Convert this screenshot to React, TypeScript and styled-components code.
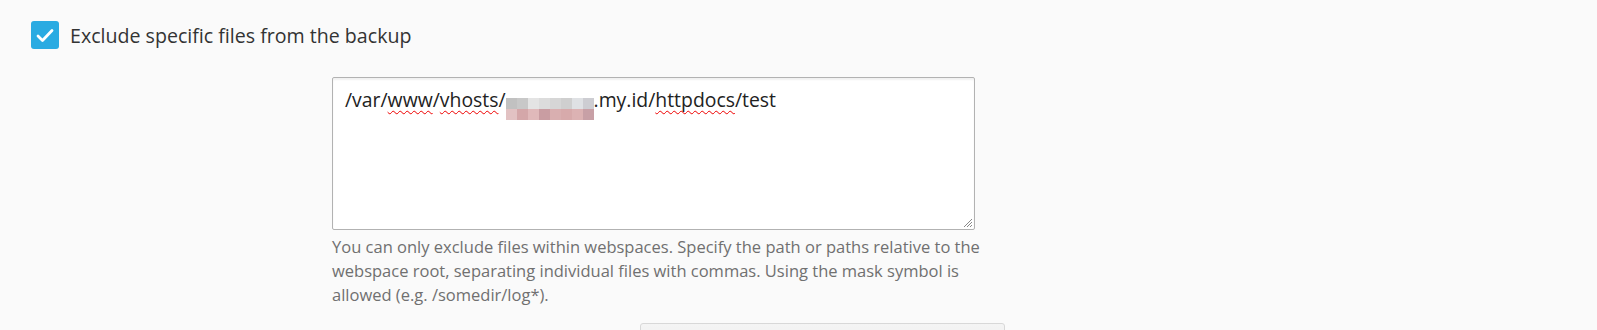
import styled, { createGlobalStyle } from 'styled-components';

const GlobalStyle = createGlobalStyle`
  html, body {
    margin: 0;
    padding: 0;
    background: #fafafa;
  }

  body {
    font-family: 'Open Sans', 'Noto Sans', 'Liberation Sans', sans-serif;
    color: #333;
  }
`;

const Page = styled.div`
  width: 1597px;
  height: 330px;
  overflow: hidden;
  background: #fafafa;
`;

const CheckRow = styled.label`
  display: flex;
  align-items: center;
  gap: 11px;
  padding: 21px 0 0 31px;
  font-size: 19.6px;
  color: #333;
  cursor: pointer;
`;

const CheckBox = styled.span`
  width: 28px;
  height: 28px;
  border-radius: 3px;
  background: #2aabe2;
  display: flex;
  align-items: center;
  justify-content: center;
`;

const Field = styled.div`
  display: flex;
  flex-direction: column;
  margin: 28px 0 0 332px;
  width: 680px;
`;

const TextBox = styled.div`
  position: relative;
  box-sizing: border-box;
  width: 643px;
  height: 153px;
  padding: 8px 12px;
  background: #fff;
  border: 1px solid #b2b2b2;
  border-radius: 2px;
  box-shadow: inset 0 2px 2px rgba(0, 0, 0, 0.06);
  font-size: 19.4px;
  color: #222;
  line-height: 28px;
`;

const Misspelled = styled.span`
  text-decoration: underline wavy #e00;
  text-decoration-thickness: 1px;
  text-underline-offset: 3px;
  text-decoration-skip-ink: none;
`;

const Mosaic = styled.span`
  display: inline-grid;
  grid-template-columns: repeat(8, 11px);
  grid-template-rows: 11px 11px;
  vertical-align: -2px;
`;

const Cell = styled.span<{ $c: string }>`
  background: ${(p) => p.$c};
`;

const Grip = styled.svg`
  position: absolute;
  right: 1px;
  bottom: 1px;
`;

const Hint = styled.p`
  margin: 5px 0 0;
  font-size: 16.5px;
  line-height: 24px;
  color: #707070;
`;

const Actions = styled.div`
  display: flex;
  margin: 16px 0 0 640px;
`;

const Button = styled.div`
  width: 363px;
  height: 36px;
  border: 1px solid #d8d8d8;
  border-radius: 3px;
  background: linear-gradient(#f4f4f4, #ececec);
`;

const TOP = ['#c1c1c1', '#c8c8c8', '#e4e4e4', '#dcdcdc', '#d6d6d6', '#cfcfcf', '#dfe1e4', '#cdcdd2'];
const BOTTOM = ['#e2c2c3', '#d4a7a9', '#e0b9ba', '#c99da2', '#d9afb0', '#d7aaab', '#dcb2b3', '#c8a0a6'];

function App() {
  return (
    <Page>
      <GlobalStyle />
      <CheckRow>
        <CheckBox>
          <svg width='18' height='15' viewBox='0 0 18 15'>
            <path d='M2 8 L6.5 12.5 L16 2.5' fill='none' stroke='#fff' strokeWidth='2.8' strokeLinecap='round' strokeLinejoin='round' />
          </svg>
        </CheckBox>
        Exclude specific files from the backup
      </CheckRow>
      <Field>
        <TextBox>
          /var/<Misspelled>www</Misspelled>/<Misspelled>vhosts</Misspelled>/
          <Mosaic>
            {TOP.map((c, i) => (
              <Cell key={`t${i}`} $c={c} />
            ))}
            {BOTTOM.map((c, i) => (
              <Cell key={`b${i}`} $c={c} />
            ))}
          </Mosaic>
          .my.id/<Misspelled>httpdocs</Misspelled>/test
          <Grip width='10' height='10' viewBox='0 0 10 10'>
            <path d='M9 1 L1 9 M9 4 L4 9 M9 7 L7 9' stroke='#888' strokeWidth='1' />
          </Grip>
        </TextBox>
        <Hint>
          You can only exclude files within webspaces. Specify the path or paths relative to the webspace root,
          separating individual files with commas. Using the mask symbol is allowed (e.g. /somedir/log*).
        </Hint>
      </Field>
      <Actions>
        <Button />
      </Actions>
    </Page>
  );
}

export default App;
